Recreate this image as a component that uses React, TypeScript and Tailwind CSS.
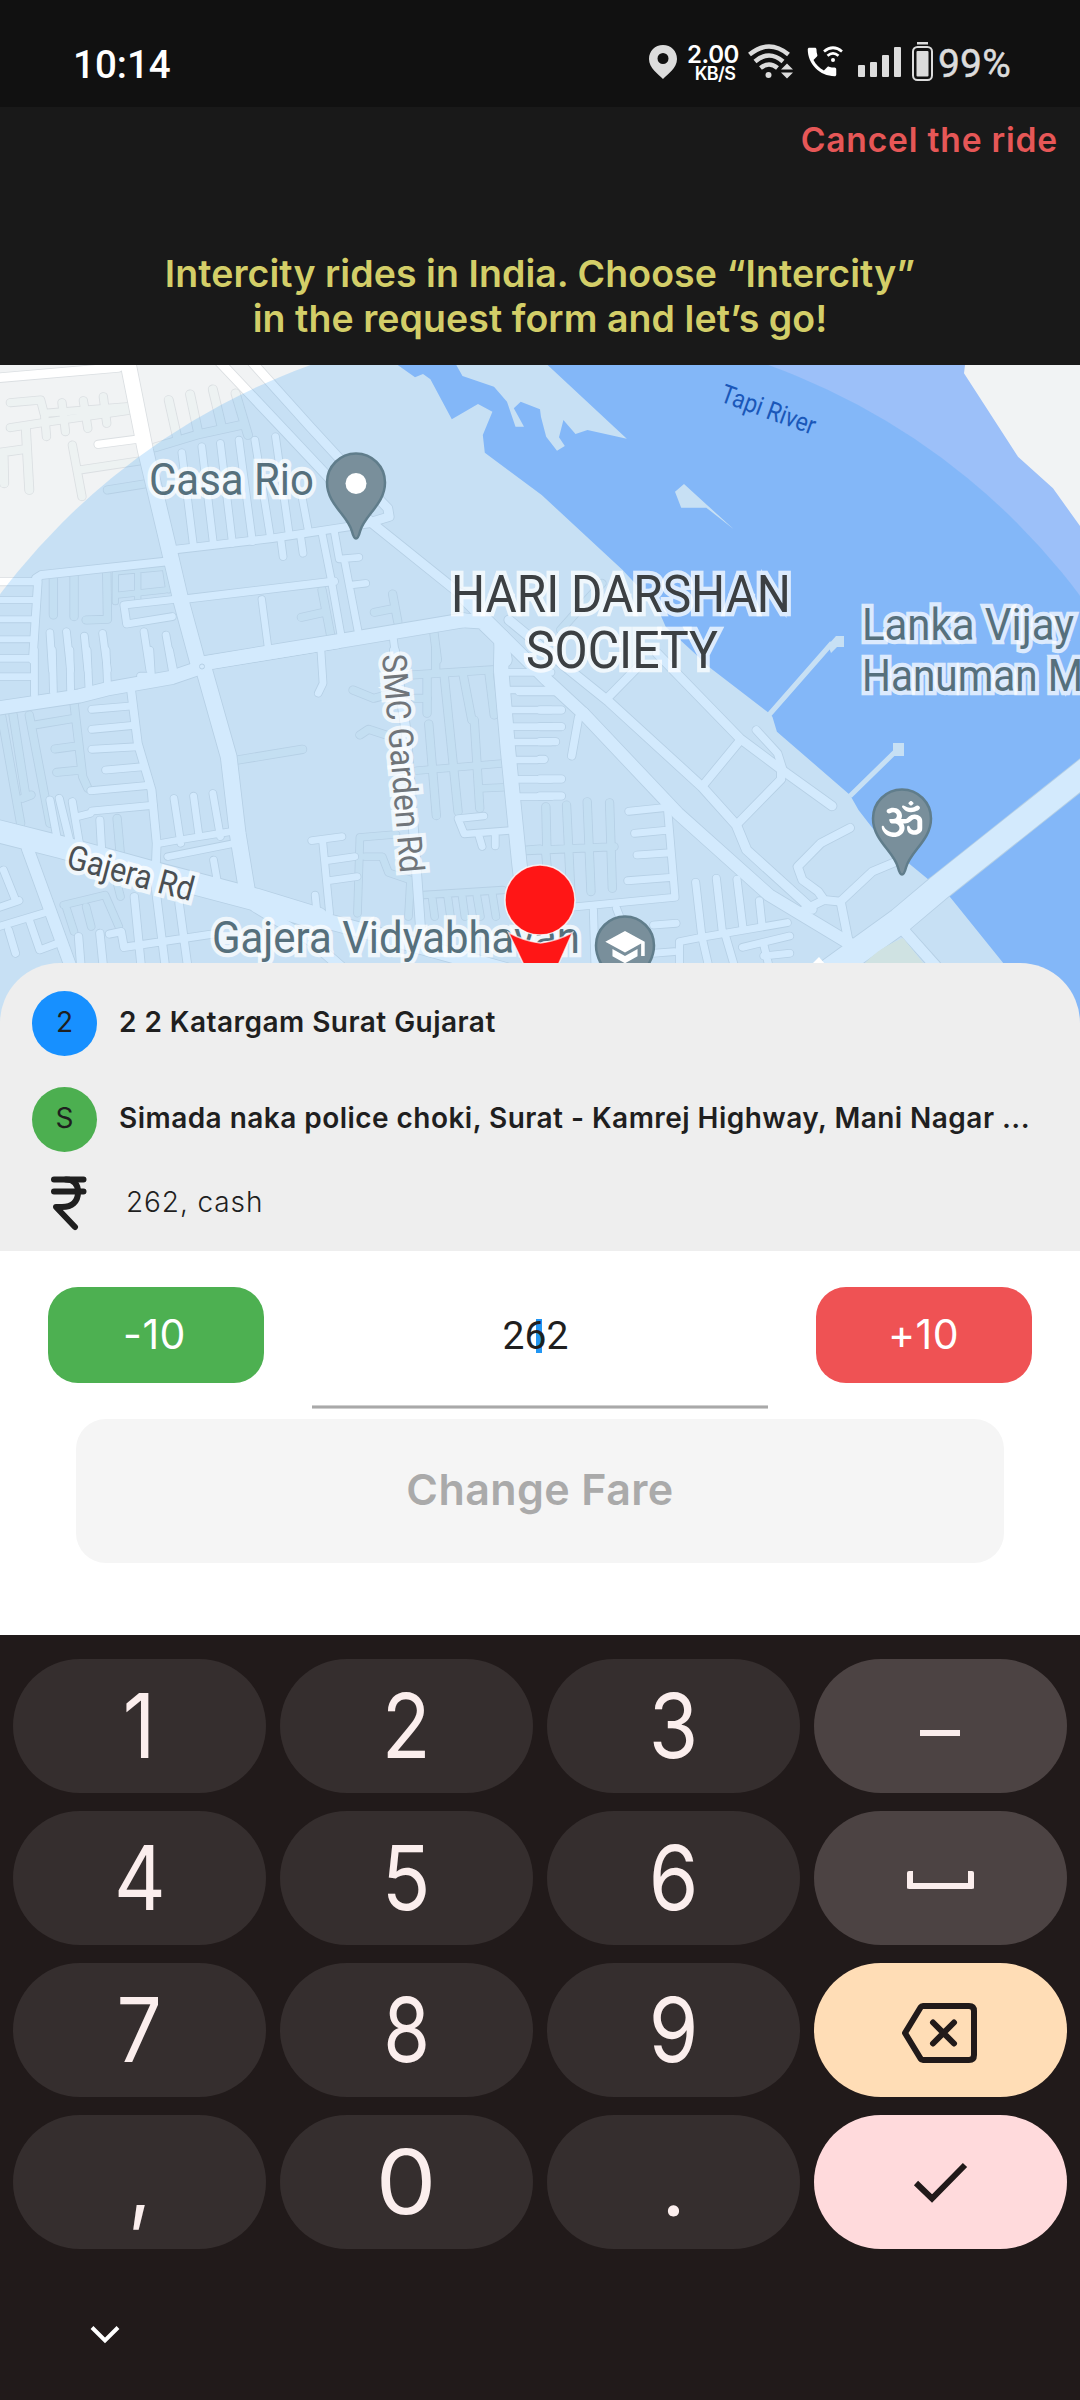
import React from 'react';
import { FaOm } from 'react-icons/fa6';
import { MdSchool, MdPhone } from 'react-icons/md';

type Road = [string, number];
type Tile = { t: string; minor: Road[]; major: Road[] };

const tiles: Tile[] = [
  {
    t: 'translate(0 360) scale(0.3444 0.3333)',
    minor: [
      ['M30 128L118 120L128 160L370 140', 22],
      ['M30 203L110 190L370 152', 22],
      ['M180 128L190 215M242 122L255 205M300 110L310 190M130 170L135 230', 22],
      ['M75 205L85 390M0 278L70 268M10 280L12 370', 24],
      ['M210 255L238 410M232 330L405 303M312 390L420 372', 22],
      ['M490 120L515 235M552 103L575 215M618 88L645 205M684 100L720 225M450 262L580 222L700 195', 24],
      ['M155 650V765M215 645V770M310 640L312 778L250 780', 22],
      ['M335 640V725M345 635L480 622L490 690M400 640V720M345 705L480 690', 16],
      ['M935 690L960 825M875 772L940 757M1140 702L1155 785M1087 757L1145 745M1260 820L1270 900', 22],
    ],
    major: [
      ['M-10 54L345 22', 26],
      ['M285 253L395 238', 22],
      ['M368 -10L422 270L498 600L525 720L575 910', 44],
      ['M628 -5L820 205L1075 485L1340 705', 27],
      ['M722 -5L900 200L985 295L1126 445L1130 470L1075 487', 26],
      ['M515 568L790 535L1075 490', 23],
      ['M528 278L562 560M586 260L620 555M640 250L675 550M694 240L733 545M740 240L785 530M800 230L840 525M875 400L895 510M815 535L822 590M873 530L880 580', 20],
      ['M935 520L960 650L990 825M970 510L985 597L1042 592M1000 600L1040 815M1020 675L1062 670', 20],
      ['M540 717L970 664', 23],
      ['M510 718L360 735L368 792L500 770', 21],
      ['M590 910L1050 832L1345 781', 42],
      ['M105 655L120 645L480 605', 24],
      ['M-10 665H110L95 900', 22],
      ['M-10 720H100M-10 778H100M-10 838H100', 18],
      ['M760 718L778 860', 19],
      ['M145 818L152 930M193 815L205 930M245 828L255 930M298 820L312 930M418 815L435 930M482 825L500 930M1142 835L1150 900', 20],
      ['M1340 781L1400 785L1455 840L1465 900', 42],
    ],
  },
  {
    t: 'translate(0 650) scale(0.3444 0.3333)',
    minor: [
      ['M215 160L240 380L255 415M85 195L145 520M100 225L215 205M160 297L225 288M165 367L235 360M5 200L60 520M38 195L75 440M65 445L90 435', 22],
      ['M340 505L350 620', 22],
      ['M690 330L878 298', 23],
      ['M185 765L305 735L345 830M190 765L215 845M250 770L265 830M340 700L350 740', 20],
      ['M1025 120L1085 145L1140 130M1045 255L1070 238L1130 258M1195 75L1450 58M1205 145H1240', 22],
      ['M1240 80V190M1245 222L1267 497M1290 80L1330 485M1345 75L1370 210M1377 210L1393 475M1420 70L1435 195M1265 0V60', 22],
      ['M1210 362L1460 340M1395 415L1460 412', 20],
      ['M1150 553L1045 562L1038 790M1060 620L1110 620L1128 668L1192 690L1186 800', 20],
      ['M1230 735L1460 720M1255 745L1262 800M1300 740L1308 800M1342 740L1350 800M1385 740L1395 800M1430 735L1440 800M1520 600L1568 596', 20],
    ],
    major: [
      ['M-10 175L230 138L310 117L500 82L590 50', 40],
      ['M590 50L664 320L690 550L720 740', 46],
      ['M590 40L980 -25', 40],
      ['M-20 540L180 592L460 672L740 748L920 805', 66],
      ['M900 800L1100 855L1500 970', 44],
      ['M740 770L900 870L1000 960', 30],
      ['M100 0V135M-10 25H100M-10 80H95', 20],
      ['M152 0L155 125M203 0L205 120M253 0L258 110M308 0L312 105M435 0L440 85M492 0L507 75M408 78H440', 20],
      ['M380 115L400 280L440 420L455 580L452 660', 23],
      ['M267 178L380 168M267 238L390 226M267 298L400 290M307 360L415 350M264 422L435 406M267 483L445 466', 21],
      ['M145 450L165 560M172 445L203 575M210 455L232 590M225 500L262 490M290 510L295 600', 21],
      ['M505 445L525 580M562 438L578 560M618 430L640 560M455 582L520 570L670 545M487 620L690 578M620 630L632 700', 20],
      ['M80 595L205 950', 34],
      ['M-10 832L140 785M10 660L45 750M-10 775L55 752M25 840L45 910M85 810L115 900L180 875', 21],
      ['M390 740L410 950M450 700L480 950M520 760L545 950M318 852L352 845L360 892L620 852M290 850L300 950M228 860L235 950', 22],
      ['M905 572L993 560M937 575L957 790M950 632L1030 620M955 692L1037 680M915 735L920 785', 20],
      ['M932 5L938 100L924 130', 20],
      ['M1145 0L1180 250L1205 600L1222 850', 26],
      ['M1457 -40L1455 60L1475 300L1508 640L1515 700', 42],
      ['M1405 498L1330 506L1348 552L1500 540M1390 555L1400 590M1438 550V588', 20],
      ['M1470 67H1600M1470 120H1600M1475 180H1600M1475 230H1600M1480 276H1600M1480 330H1560M1485 388H1600M1490 440H1600', 20],
    ],
  },
  {
    t: 'translate(540 650) scale(0.3444 0.3333)',
    minor: [
      ['M17 470L20 600M77 465L90 740M137 455L148 725M202 458L210 715M-40 602L215 590M17 610L28 740', 22],
      ['M60 -60L180 -200', 22],
    ],
    major: [
      ['M-229 -165L20 90L130 195L400 490L665 735L895 878', 36],
      ['M-90 -90L80 55L200 155L470 410L570 525L600 600L790 778', 27],
      ['M340 10L580 265L700 358L848 468', 26],
      ['M195 145L290 45M582 270L472 408M700 360V388L570 525', 24],
      ['M628 240L690 310L706 362M130 185L112 202L92 318', 22],
      ['M-60 125H60M0 180H62M0 230H62M0 275H45M0 328H12M0 387H62M0 438H62', 22],
      ['M900 534L815 580L748 650L762 690L808 725L825 750L872 755L965 665L1050 628M765 780L825 750', 24],
      ['M873 755L895 870', 24],
      ['M258 484L370 472L392 742L90 772M275 550L375 540M282 615L380 608M255 692L385 682', 21],
      ['M452 697L470 860M512 685L530 850M572 688L590 840M637 752L645 830M405 940V875L470 862L718 818', 21],
      ['M470 860L490 950M538 855L565 950M588 892L725 858M650 918L725 910M650 885L665 950M330 825L395 820M330 910L390 905M155 780L160 950M222 775L235 810', 21],
      ['M1055 840L1150 950', 32],
      ['M1640 318L1160 712L1045 812L840 965', 76],
    ],
  },
];

function RoadLayer({ kind }: { kind: 'minor' | 'major' }) {
  const fill = kind === 'minor' ? '#edf2f2' : '#ffffff';
  return (
    <g fill="none" strokeLinecap="round" strokeLinejoin="round">
      {tiles.map((tile, i) => (
        <g key={`c${i}`} transform={tile.t} stroke="#dbdfe2">
          {tile[kind].map(([d, w], k) => (
            <path key={k} d={d} strokeWidth={w + 5} />
          ))}
        </g>
      ))}
      {tiles.map((tile, i) => (
        <g key={`f${i}`} transform={tile.t} stroke={fill}>
          {tile[kind].map(([d, w], k) => (
            <path key={k} d={d} strokeWidth={w} />
          ))}
        </g>
      ))}
    </g>
  );
}

const PIN = 'M0 56C-2 56 -3 53 -4 49C-8 33 -29 22 -29 0A29 29 0 0 1 29 0C29 22 8 33 4 49C3 53 2 56 0 56Z';

function Pin({ x, y, children }: { x: number; y: number; children?: React.ReactNode }) {
  return (
    <g transform={`translate(${x} ${y})`}>
      <path d={PIN} fill="#798f9b" stroke="#607d8b" strokeWidth="2.5" />
      {children}
    </g>
  );
}

type LabelProps = { x: number; y: number; w?: number; size: number; color: string; rotate?: number; halo?: boolean; children: string };

function Label({ x, y, w, size, color, rotate = 0, halo = true, children }: LabelProps) {
  return (
    <text
      transform={`translate(${x} ${y}) rotate(${rotate})`}
      fontSize={size}
      fill={color}
      textLength={w}
      lengthAdjust="spacingAndGlyphs"
      stroke={halo ? '#ffffff' : 'none'}
      strokeOpacity={0.72}
      strokeWidth={halo ? 8.5 : 0}
      strokeLinejoin="miter"
      paintOrder="stroke"
    >
      {children}
    </text>
  );
}

function MapView() {
  return (
    <svg viewBox="0 365 1080 668" className="block h-[668px] w-[1080px] font-[Roboto,sans-serif]">
      <rect x="0" y="365" width="1080" height="668" fill="#f1f3f4" />
      <path
        fill="#9cc0f9"
        d="M397.7 365L415 377.3L423 374L430.4 379.3L451.8 419.3L478 404L492.4 411.7L482.8 435L484.8 452.7L541.7 495L622.6 570L657 606.7L665.7 626.7L698.4 656.7L708.7 666.7L767.3 711.7L772.4 716.7L776.9 731.7L850 795L858.5 810L884 843L929 880L949.8 896.7L1003 962.7L1080 1060V526L1053 488.3L1018 456.7L964 373.3L965 365Z"
      />
      <path
        fill="#f1f3f4"
        d="M456.3 365L462.5 376L494 386.7L507 401.7L515.5 426.7H524L513.8 408.3L520.7 401.7L540 409.3L541 417L546.2 436.7L557 450.7L564.8 446L559 437.3L563.4 420L575.5 434L587.5 430L626.8 438.7L547.6 365Z"
      />
      <path fill="#f1f3f4" d="M675 491.7L684 484L707 505L733.5 529L706.3 507.7H681.2Z" />
      <path d="M768 716L832 643M850 796L896 751" stroke="#f1f3f4" strokeWidth="5" />
      <path d="M828 645L836 636H844V647H837L831 653ZM893 743H904V756H893Z" fill="#f1f3f4" />
      <RoadLayer kind="minor" />
      <RoadLayer kind="major" />
      <path d="M864 964C880 948 890 944 903 938L924 964Z" fill="#fbf6de" />
      <circle cx="202" cy="666.5" r="2.5" fill="#fff" stroke="#dbdfe2" />
      <circle cx="539.5" cy="1000" r="675" fill="#2196f3" fillOpacity="0.2" />
      <path d="M812 964L819 957L825 964Z" fill="#fff" />

      <Label x={719} y={401} w={99} size={26} color="#1a57b9" rotate={20} halo={false}>Tapi River</Label>
      <Label x={149} y={495} w={165} size={44} color="#56707c">Casa Rio</Label>
      <Label x={451} y={611.5} w={340} size={51} color="#3c4043">HARI DARSHAN</Label>
      <Label x={526} y={668} w={192} size={51} color="#3c4043">SOCIETY</Label>
      <Label x={862} y={640} w={212} size={44} color="#56707c">Lanka Vijay</Label>
      <Label x={862} y={691} w={312} size={44} color="#56707c">Hanuman Mandir</Label>
      <Label x={382} y={655} w={219} size={34} color="#70757a" rotate={85.2}>SMC Garden Rd</Label>
      <Label x={65} y={867.5} w={130} size={34} color="#4a4f53" rotate={15}>Gajera Rd</Label>
      <Label x={212} y={953} w={368} size={44} color="#56707c">Gajera Vidyabhavan</Label>

      <Pin x={356} y={482.5}>
        <circle cy="1" r="10.5" fill="#fff" />
      </Pin>
      <Pin x={902} y={818.5}>
        <g transform="translate(-20.500 -17.500) scale(1 0.88)"><FaOm size={41} color="#fff" /></g>
      </Pin>
      <Pin x={625} y={945.5}>
        <g transform="translate(-21.5 -20)"><MdSchool size={43} color="#fff" /></g>
      </Pin>
      <path d="M508.500 932.500Q524 941 540.500 943Q557 941 572.500 932.500L559 963L541 1004L523 963Z" fill="#ff1616" stroke="#fff" strokeOpacity="0.7" strokeWidth="1.500" />
      <circle cx="540" cy="900" r="35" fill="#ff1616" stroke="#fff" strokeOpacity="0.8" strokeWidth="1.500" />
    </svg>
  );
}

function StatusBar() {
  return (
    <div className="flex h-[107px] items-start bg-[#111111] pt-[40px] font-[Roboto,sans-serif]">
      <div className="mt-[1px] ml-[73px] h-[47px] w-[101px] text-[38.500px] leading-[47px] font-medium whitespace-nowrap text-white">10:14</div>
      <svg className="mt-[5px] ml-[475px] h-[34px] w-[28px]" viewBox="0 0 28 34" fill="#dcdcdc">
        <path fillRule="evenodd" d="M14 0C6 0 0 6 0 14C0 23 9 29 14 34C19 29 28 23 28 14C28 6 22 0 14 0ZM14 8a5.500 5.500 0 1 1 0 11a5.500 5.500 0 1 1 0 -11Z" />
      </svg>
      <div className="ml-[10px] flex w-[52px] flex-col items-center font-[Inter,sans-serif] font-semibold text-white">
        <span className="mt-[3px] h-[23px] text-[24px] leading-[24px] tracking-[-0.4px]">2.00</span>
        <span className="ml-[4px] h-[16px] text-[18px] leading-[16px] tracking-[-0.6px]">KB/S</span>
      </div>
      <svg className="mt-[4px] ml-[9px] h-[35px] w-[45px]" viewBox="0 0 45 35" fill="none" stroke="#dcdcdc" strokeWidth="4.500">
        <path d="M1.500 10.500Q21 -5.500 40.500 10.500M7 17.500Q21 5.500 35 17.500M12.500 24Q21 17 29.500 24" />
        <circle cx="20.500" cy="31" r="3" fill="#dcdcdc" stroke="none" />
        <path d="M33 25.500L39 19.500L45 25.500ZM33 28.500L39 34.500L45 28.500Z" fill="#dcdcdc" stroke="none" />
      </svg>
      <div className="relative mt-[5px] ml-[15px] h-[34px] w-[35px]">
        <MdPhone className="absolute -top-[2px] -left-[5px] size-[38px] text-white" />
        <svg className="absolute top-[1px] right-0 h-[17px] w-[20px]" viewBox="0 0 20 17" fill="none" stroke="#fff" strokeWidth="2.700">
          <path d="M1 5.500Q10 -2 19 5.500M4.500 9.800Q10 5 15.500 9.800" />
          <circle cx="10" cy="14" r="2" fill="#fff" stroke="none" />
        </svg>
      </div>
      <div className="mt-[7px] ml-[15px] flex h-[30px] items-end gap-[5px]">
        <div className="h-[12px] w-[7px] rounded-[1px] bg-[#dcdcdc]" />
        <div className="h-[15px] w-[7px] rounded-[1px] bg-[#dcdcdc]" />
        <div className="h-[22px] w-[7px] rounded-[1px] bg-[#dcdcdc]" />
        <div className="h-[30px] w-[7px] rounded-[1px] bg-[#dcdcdc]" />
      </div>
      <svg className="mt-[2px] ml-[11px] h-[39px] w-[21px]" viewBox="0 0 21 39">
        <rect x="5" y="0" width="11" height="2.500" fill="#dcdcdc" />
        <rect x="1" y="5" width="19" height="33" rx="4.500" fill="none" stroke="#dcdcdc" strokeWidth="2" />
        <rect x="4.500" y="9" width="12" height="25.500" rx="1" fill="#dcdcdc" />
      </svg>
      <div className="mt-[1px] ml-[5px] h-[47px] text-[39px] leading-[47px] tracking-[0.2px] whitespace-nowrap text-[#dcdcdc] [-webkit-text-stroke:0.5px_#dcdcdc]">99%</div>
    </div>
  );
}

function Header() {
  return (
    <div className="h-[258px] bg-[#191919] pt-[1px] font-semibold">
      <div className="flex h-[64px] items-center justify-end pr-[22px] text-[33.600px] tracking-[0.800px] whitespace-nowrap text-[#e65757]">Cancel the ride</div>
      <div className="mt-[80px] text-center text-[37.500px] leading-[44.500px] tracking-[0.060px] whitespace-nowrap text-[#d3ce68]">
        <p>Intercity rides in India. Choose “Intercity”</p>
        <p>in the request form and let’s go!</p>
      </div>
    </div>
  );
}

function RideDetails() {
  const stops = [
    { badge: '2', text: '2 2 Katargam Surat Gujarat' },
    { badge: 'S', text: 'Simada naka police choki, Surat - Kamrej Highway, Mani Nagar ...' },
  ];
  return (
    <div className="relative -mt-[70px] h-[288px] rounded-t-[60px] bg-[#eeeeee] pt-[12px] text-[#1f1f1f]">
      {stops.map((s) => (
        <div key={s.badge} className="flex h-[96px] items-center pl-[32px]">
          <div className={`flex size-[65px] items-center justify-center rounded-full pb-[2px] text-[28px] ${s.badge === '2' ? 'bg-[#1790ff]' : 'bg-[#4caf50]'}`}>{s.badge}</div>
          <div className="ml-[22px] -mt-[2px] text-[28px] font-semibold tracking-[0.460px] whitespace-nowrap">{s.text}</div>
        </div>
      ))}
      <div className="flex h-[72px] items-center pl-[50px]">
        <svg className="h-[55px] w-[37px]" viewBox="0 0 37 55" fill="none" stroke="#1f1f1f" strokeWidth="6" strokeLinecap="round" strokeLinejoin="round">
          <path d="M4 3.500H33.500M4 15.500H33.500" />
          <path d="M16 3.500C25 3.500 28 9 28 16C28 26 22 31 12 31H6L25 51" />
        </svg>
        <div className="-mt-[2px] ml-[39px] text-[28px] tracking-[0.900px] whitespace-nowrap">
          <span className="font-[350]">262, cash</span>
        </div>
      </div>
    </div>
  );
}

function FareEditor() {
  return (
    <div className="h-[384px] bg-white pt-[36px]">
      <div className="flex justify-between px-[48px]">
        <button className="h-[96px] w-[216px] rounded-[30px] bg-[#4db051] pr-[3px] text-[41px] tracking-[0.500px] text-white">-10</button>
        <div className="flex h-[122px] w-[456px] flex-col justify-between">
          <div className="relative pt-[1px] pr-[9px] text-center font-[Roboto,sans-serif] text-[39px] leading-[96px] text-[#1f1f1f]">
            <span className="absolute top-[32px] left-[224px] h-[34px] w-[6px] bg-[#2196f3]" />
            <span className="relative">262</span>
          </div>
          <div className="h-[4px] border-y border-[#cfcfcf] bg-[#a9a9a9]" />
        </div>
        <button className="h-[96px] w-[216px] rounded-[30px] bg-[#ef5254] pr-[1px] text-[41px] tracking-[0.500px] text-white">+10</button>
      </div>
      <button className="mx-[76px] mt-[10px] flex h-[144px] w-[928px] items-center justify-center rounded-[30px] bg-[#f5f5f5] pb-[3px] text-[43px] font-semibold tracking-[0.400px] text-[#aaaaaa]">
        Change Fare
      </button>
    </div>
  );
}

function Key({ children, tone = 'bg-[#352e2e]' }: { children: React.ReactNode; tone?: string }) {
  return <div className={`flex h-[134px] items-center justify-center rounded-full ${tone}`}>{children}</div>;
}

function Digit({ children, cls = 'scale-x-[0.9]' }: { children: string; cls?: string }) {
  return <span className={`block text-[89px] leading-[134px] text-[#fbeeed] ${cls}`}>{children}</span>;
}

function Keyboard() {
  return (
    <div className="h-[765px] bg-[#211a1a] pt-[24px]">
      <div className="grid grid-cols-4 gap-x-[14px] gap-y-[18px] px-[13px]">
        <Key><Digit>1</Digit></Key>
        <Key><Digit>2</Digit></Key>
        <Key><Digit>3</Digit></Key>
        <Key tone="bg-[#4c4343]"><div className="mt-[14px] mr-[1px] h-[6px] w-[40px] bg-[#fbeeed]" /></Key>
        <Key><Digit>4</Digit></Key>
        <Key><Digit>5</Digit></Key>
        <Key><Digit>6</Digit></Key>
        <Key tone="bg-[#4c4343]">
          <div className="mt-[3px] h-[18px] w-[67px] rounded-[2px] border-[6px] border-t-0 border-[#fbeeed]" />
        </Key>
        <Key><Digit>7</Digit></Key>
        <Key><Digit cls="scale-x-[0.85]">8</Digit></Key>
        <Key><Digit>9</Digit></Key>
        <Key tone="bg-[#ffddb6]">
          <svg className="mt-[6px] -ml-[4px] h-[60px] w-[76px]" viewBox="0 0 76 60" fill="none" stroke="#211a1a" strokeWidth="6" strokeLinejoin="round">
            <path d="M22 3H68Q73 3 73 8V52Q73 57 68 57H22Q20.500 57 19.500 55.500L4 30L19.500 4.500Q20.500 3 22 3Z" />
            <path d="M32 19.500L53 40.500M53 19.500L32 40.500" strokeLinecap="round" />
          </svg>
        </Key>
        <Key><Digit>,</Digit></Key>
        <Key><Digit cls="scale-x-[1.08]">0</Digit></Key>
        <Key><Digit cls="font-[Lato,sans-serif]">.</Digit></Key>
        <Key tone="bg-[#ffdadc]">
          <svg className="mr-[2px] h-[42px] w-[56px]" viewBox="0 0 56 42" fill="none" stroke="#211a1a" strokeWidth="6">
            <path d="M4 22L20 37.500L53 4" />
          </svg>
        </Key>
      </div>
      <svg className="mt-[76px] ml-[90px] h-[20px] w-[30px]" viewBox="0 0 30 20" fill="none" stroke="#fff" strokeWidth="4">
        <path d="M2 2.500L15 15.500L28 2.500" />
      </svg>
    </div>
  );
}

export default function App() {
  return (
    <div className="h-[2400px] w-[1080px] overflow-hidden bg-white font-[Inter,sans-serif]">
      <StatusBar />
      <Header />
      <MapView />
      <RideDetails />
      <FareEditor />
      <Keyboard />
    </div>
  );
}
